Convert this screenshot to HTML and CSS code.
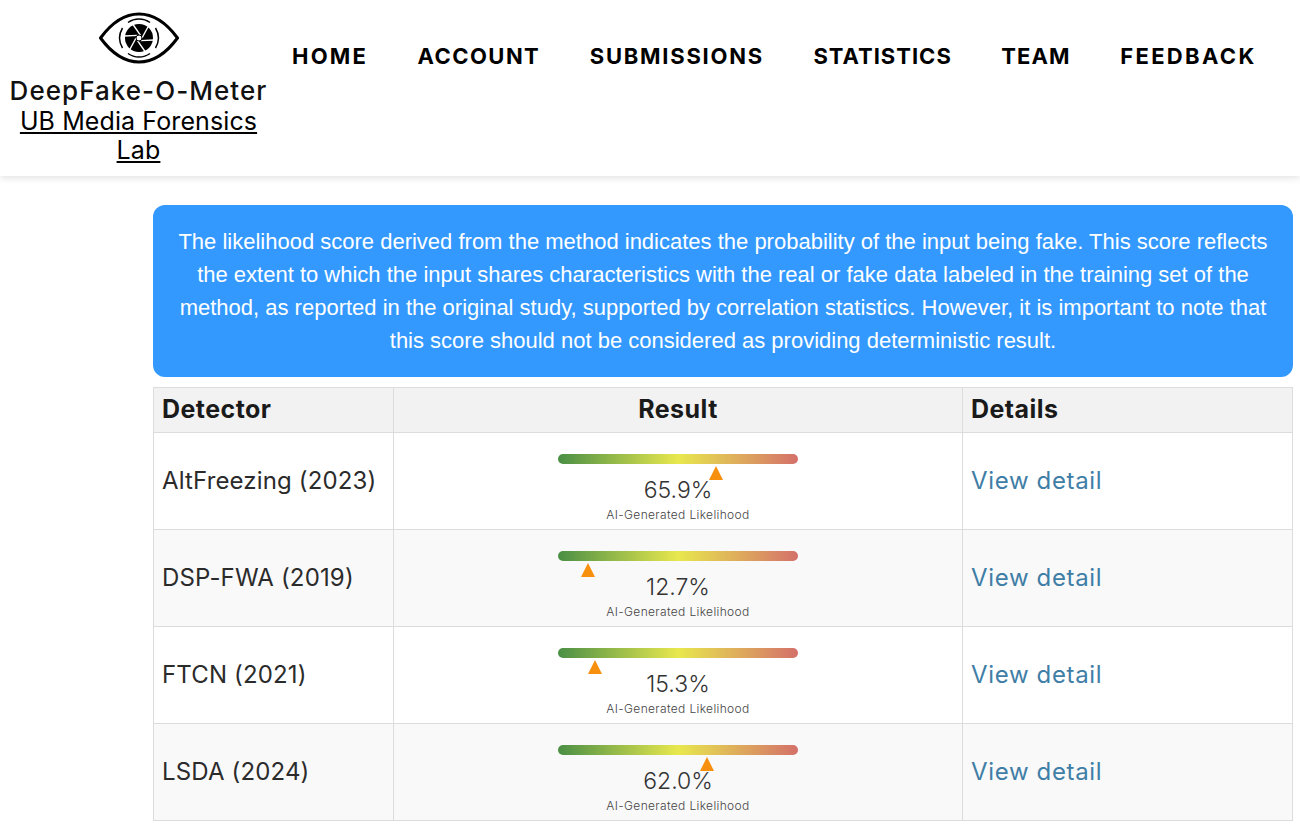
FILE: index.html
```html
<!DOCTYPE html>
<html lang="en">
<head>
<meta charset="utf-8">
<title>DeepFake-O-Meter</title>
<link rel="stylesheet" href="styles.css">
</head>
<body>
<header class="site-header">
  <div class="brand">
    <svg class="logo" viewBox="0 0 80 52" width="80" height="52" aria-hidden="true">
      <path class="eye" d="M1.5 26 C14 9 27 2 40 2 C53 2 66 9 78.5 26 C66 43 53 50 40 50 C27 50 14 43 1.5 26 Z"/>
      <g class="arcs">
        <path d="M29 10.5 A19 19 0 0 1 51 10.5"/>
        <path d="M29 41.5 A19 19 0 0 0 51 41.5"/>
        <path d="M23.5 16 A19.5 19.5 0 0 0 23.5 36"/>
        <path d="M56.5 16 A19.5 19.5 0 0 1 56.5 36"/>
      </g>
      <circle cx="40" cy="26" r="14" fill="#000"/>
      <g class="blades">
        <path d="M43 26 L50 13"/>
        <path d="M41.5 28.6 L55 28"/>
        <path d="M38.5 28.6 L46 39.5"/>
        <path d="M37 26 L30 39"/>
        <path d="M38.5 23.4 L25 24"/>
        <path d="M41.5 23.4 L34 12.5"/>
      </g>
      <circle cx="40" cy="26" r="3" fill="#fff" stroke="#000" stroke-width="1"/>
    </svg>
    <div class="brand-name">DeepFake-O-Meter</div>
    <a class="brand-lab" href="#">UB Media Forensics Lab</a>
  </div>
  <nav class="main-nav">
    <a class="nav-home" href="#">HOME</a>
    <a class="nav-account" href="#">ACCOUNT</a>
    <a class="nav-submissions" href="#">SUBMISSIONS</a>
    <a class="nav-statistics" href="#">STATISTICS</a>
    <a class="nav-team" href="#">TEAM</a>
    <a class="nav-feedback" href="#">FEEDBACK</a>
  </nav>
</header>
<main class="content">
  <div class="notice">The likelihood score derived from the method indicates the probability of the input being fake. This score reflects the extent to which the input shares characteristics with the real or fake data labeled in the training set of the method, as reported in the original study, supported by correlation statistics. However, it is important to note that this score should not be considered as providing deterministic result.</div>
  <table class="results">
    <colgroup><col class="c1"><col class="c2"><col class="c3"></colgroup>
    <thead>
      <tr><th>Detector</th><th class="center">Result</th><th>Details</th></tr>
    </thead>
    <tbody>
      <tr>
        <td>AltFreezing (2023)</td>
        <td class="center score"><div class="meter"><div class="bar"></div><span class="mark" style="left:65.9%"></span><div class="pct">65.9%</div><div class="lbl">AI-Generated Likelihood</div></div></td>
        <td><a href="#">View detail</a></td>
      </tr>
      <tr>
        <td>DSP-FWA (2019)</td>
        <td class="center score"><div class="meter"><div class="bar"></div><span class="mark" style="left:12.7%"></span><div class="pct">12.7%</div><div class="lbl">AI-Generated Likelihood</div></div></td>
        <td><a href="#">View detail</a></td>
      </tr>
      <tr>
        <td>FTCN (2021)</td>
        <td class="center score"><div class="meter"><div class="bar"></div><span class="mark" style="left:15.3%"></span><div class="pct">15.3%</div><div class="lbl">AI-Generated Likelihood</div></div></td>
        <td><a href="#">View detail</a></td>
      </tr>
      <tr>
        <td>LSDA (2024)</td>
        <td class="center score"><div class="meter"><div class="bar"></div><span class="mark" style="left:62%"></span><div class="pct">62.0%</div><div class="lbl">AI-Generated Likelihood</div></div></td>
        <td><a href="#">View detail</a></td>
      </tr>
    </tbody>
  </table>
</main>
</body>
</html>
```
FILE: styles.css
```css
html, body { margin: 0; padding: 0; background: #fff; overflow: hidden; height: 835px; }
body { font-family: Inter, "Open Sans", sans-serif; color: #212529; }

.site-header {
  height: 176px;
  display: flex;
  align-items: flex-start;
  box-shadow: 0 1px 8px rgba(0,0,0,.14);
  position: relative;
}
.brand { width: 277px; text-align: center; padding-top: 12px; color: #000; }
.logo { display: block; margin: 0 auto; }
.eye { fill: #fff; stroke: #000; stroke-width: 3; stroke-linejoin: miter; }
.arcs path { fill: none; stroke: #000; stroke-width: 1.5; }
.blades path { fill: none; stroke: #fff; stroke-width: 1.4; }
.brand-name { font-size: 26px; line-height: 33px; margin-top: 10px; letter-spacing: 1.05px; font-weight: 500; white-space: nowrap; color: #111; }
.brand-lab { display: block; margin: 0 auto; width: 250px; font-size: 25px; line-height: 29px; color: #000; text-decoration: underline; font-weight: 400; letter-spacing: .1px; }

.main-nav { display: flex; gap: 49.5px; padding: 43px 0 0 15px; }
.main-nav a { font-size: 22px; line-height: 27px; font-weight: 700; color: #000; text-decoration: none; white-space: nowrap; }
.nav-home { letter-spacing: 2.2px; }
.nav-account { letter-spacing: 1.45px; }
.nav-submissions { letter-spacing: 1.75px; }
.nav-statistics { letter-spacing: 1px; }
.nav-team { letter-spacing: 1.1px; }
.nav-feedback { letter-spacing: 2.35px; }

.content { margin: 29px 7px 0 153px; }
.notice {
  background: #3399ff;
  color: #fff;
  border-radius: 12px;
  padding: 20px 20px;
  font-family: "Liberation Sans", Arial, sans-serif;
  font-size: 22px;
  line-height: 33px;
  text-align: center;
}
.results {
  margin-top: 10px;
  width: 100%;
  border-collapse: collapse;
  table-layout: fixed;
  font-size: 24px;
  letter-spacing: .15px;
}
.c1 { width: 240px; }
.c2 { width: 569px; }
.results th, .results td { border: 1px solid #dcdcdc; padding: 0 8px; text-align: left; }
.results th { height: 42px; background: #f2f2f2; font-weight: 700; font-size: 25px; letter-spacing: .45px; color: #1a1a1a; padding-bottom: 2px; }
.results td { height: 94px; padding-bottom: 2px; color: #2b2b2b; }
.results tbody tr:nth-child(even) { background: #f9f9f9; }
.results .center { text-align: center; }
.results td.score { vertical-align: top; padding: 21px 8px 0; height: 75px; }
.results a { color: #3f7ea6; text-decoration: none; letter-spacing: .65px; }

.meter { width: 240px; margin: 0 auto; position: relative; height: 68px; letter-spacing: 0; }
.bar { height: 10px; border-radius: 5px; background: linear-gradient(to right, #4a8f45, #e8e84e 50%, #d4706a); }
.mark {
  position: absolute; top: 12px; margin-left: -7px;
  width: 0; height: 0;
  border-left: 7px solid transparent;
  border-right: 7px solid transparent;
  border-bottom: 14px solid #f7900f;
}
.pct { font-size: 23px; line-height: 28px; margin-top: 12px; color: #333; font-weight: 300; }
.lbl { font-size: 12px; line-height: 14px; margin-top: 4px; color: #444; white-space: nowrap; letter-spacing: .35px; font-weight: 300; }
```
